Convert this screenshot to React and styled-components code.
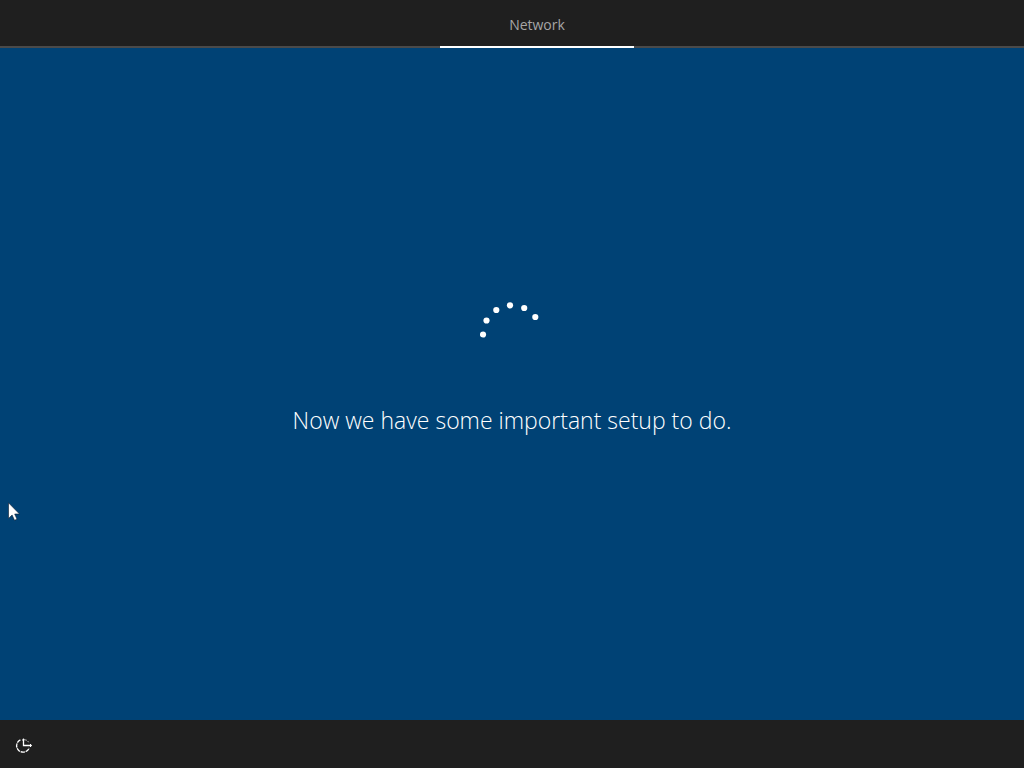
import React from 'react';
import styled, { createGlobalStyle } from 'styled-components';

const GlobalStyle = createGlobalStyle`
  * {
    box-sizing: border-box;
  }

  body {
    margin: 0;
    background: #004275;
    font-family: 'Open Sans', 'Noto Sans', sans-serif;
    color: #ffffff;
  }
`;

const dots = [
  { x: 3, y: 32.5 },
  { x: 6.5, y: 18.5 },
  { x: 16.3, y: 8 },
  { x: 30, y: 3.3 },
  { x: 44.2, y: 6 },
  { x: 55.3, y: 15 },
];

const Spinner = () => (
  <SpinnerSvg viewBox="0 0 64 64" role="img" aria-label="Loading">
    {dots.map((dot) => (
      <circle key={dot.x} cx={dot.x} cy={dot.y} r="3.1" />
    ))}
  </SpinnerSvg>
);

const EaseOfAccessIcon = () => (
  <svg width="18" height="16" viewBox="0 0 18 16" fill="none" stroke="#ffffff" strokeWidth="1.3">
    <path d="M5.4 1.8A6.5 6.5 0 1 0 14.2 10" strokeDasharray="4.2 0.8" />
    <path d="M10.5 1.7A6.5 6.5 0 0 1 14 5" strokeDasharray="1.3 1.3" strokeWidth="0.9" />
    <path d="M8.5 0.8V7.5H16.5" />
    <path d="M7.1 2.4L8.5 1L9.9 2.4M15 6L16.5 7.5L15 9" strokeWidth="1" />
  </svg>
);

const App = () => {
  return (
    <>
      <GlobalStyle />
      <Screen>
        <Header>
          <Tab aria-current="step">Network</Tab>
        </Header>

        <Main>
          <Spinner />
          <Message>Now we have some important setup to do.</Message>
        </Main>

        <Footer>
          <IconButton type="button" aria-label="Ease of access">
            <EaseOfAccessIcon />
          </IconButton>
        </Footer>

        <Pointer viewBox="0 0 12 19" aria-hidden="true">
          <path
            d="M0.5 0.8V16.4L4.1 13L6.5 18.3L9 17.2L6.7 12H11.5Z"
            fill="#ffffff"
            stroke="#0b1d30"
            strokeWidth="0.6"
          />
        </Pointer>
      </Screen>
    </>
  );
};

// Styled Components
const Screen = styled.div`
  position: relative;
  display: flex;
  flex-direction: column;
  min-height: 100vh;
`;

const Header = styled.header`
  display: grid;
  grid-template-columns: 220fr 97fr 195fr;
  height: 48px;
  background: linear-gradient(#4a4a4a, #4a4a4a) bottom / 100% 2px no-repeat #1f1f1f;
`;

const Tab = styled.div`
  grid-column: 2;
  display: flex;
  align-items: center;
  justify-content: center;
  border-bottom: 2px solid #ffffff;
  padding-top: 4px;
  font-size: 14px;
  line-height: 20px;
  color: #a6a6a6;
`;

const Main = styled.main`
  flex: 1;
  display: flex;
  flex-direction: column;
  align-items: center;
  justify-content: center;
  gap: 38px;
  padding-bottom: 30px;
`;

const SpinnerSvg = styled.svg`
  width: 64px;
  height: 64px;
  fill: #ffffff;
`;

const Message = styled.h1`
  margin: 0;
  font-size: 23px;
  line-height: 32px;
  font-weight: 350;
  text-align: center;
`;

const Footer = styled.footer`
  display: flex;
  align-items: center;
  height: 48px;
  background: #1f1f1f;
`;

const IconButton = styled.button`
  display: flex;
  align-items: center;
  justify-content: center;
  width: 48px;
  height: 48px;
  padding: 4px 0 0;
  border: none;
  background: transparent;
  cursor: pointer;
`;

// The pointer floats over everything else
const Pointer = styled.svg`
  position: absolute;
  top: 502px;
  left: 8px;
  width: 12px;
  height: 19px;
  pointer-events: none;
`;

export default App;
